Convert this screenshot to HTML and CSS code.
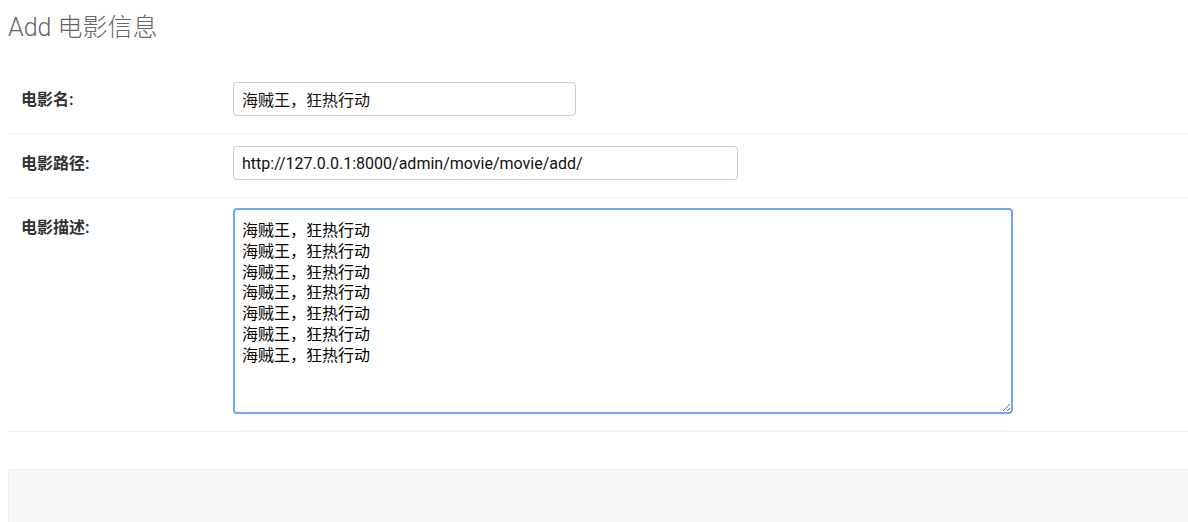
FILE: index.html
```html
<!DOCTYPE html>
<html lang="zh">
<head>
<meta charset="utf-8">
<title>Add 电影信息</title>
<link rel="stylesheet" href="styles.css">
</head>
<body>
<div class="content">
  <h1 class="title">Add 电影信息</h1>
  <form class="form">
    <div class="form-row">
      <label class="label" for="name">电影名:</label>
      <input class="field field-name" id="name" type="text" value="海贼王，狂热行动">
    </div>
    <div class="form-row">
      <label class="label" for="url">电影路径:</label>
      <input class="field field-url" id="url" type="text" value="http://127.0.0.1:8000/admin/movie/movie/add/">
    </div>
    <div class="form-row">
      <label class="label" for="desc">电影描述:</label>
      <textarea class="field field-desc" id="desc">海贼王，狂热行动
海贼王，狂热行动
海贼王，狂热行动
海贼王，狂热行动
海贼王，狂热行动
海贼王，狂热行动
海贼王，狂热行动</textarea>
    </div>
    <div class="submit-row"></div>
  </form>
</div>
</body>
</html>
```
FILE: styles.css
```css
* { box-sizing: border-box; }
html, body { margin: 0; padding: 0; background: #fff; overflow: hidden; }
body {
  font-family: Roboto, "Noto Sans CJK SC", sans-serif;
  font-size: 16px;
  color: #333;
  width: 1188px;
  height: 522px;
}
.content {
  padding-left: 8px;
}
.title {
  margin: 14px 0 28px;
  font-size: 25px;
  line-height: 28px;
  font-weight: 300;
  color: #666;
}
.form-row {
  display: flex;
  align-items: flex-start;
  padding: 12px 0 17px 13px;
  border-bottom: 1px solid #eee;
}
.label {
  width: 212px;
  flex: none;
  padding-top: 8px;
  font-weight: bold;
  font-size: 16px;
  line-height: 20px;
  color: #333;
}
.field {
  font-family: Roboto, "Noto Sans CJK SC", sans-serif;
  font-size: 16px;
  color: #111;
  border: 1px solid #ccc;
  border-radius: 4px;
  background: #fff;
  padding: 0 8px;
  height: 34px;
  outline: none;
}
.field-name { width: 343px; }
.field-url { width: 505px; }
.field-desc {
  width: 780px;
  height: 206px;
  margin-top: -2px;
  border: 2px solid #6ea7f6;
  padding: 9px 7px;
  line-height: 20.8px;
  resize: both;
  font-family: "Noto Sans CJK SC", sans-serif;
  color: #000;
}
.submit-row {
  margin-top: 37px;
  margin-right: -20px;
  height: 53px;
  background: #f8f8f8;
  border: 1px solid #eee;
  border-bottom: none;
  border-radius: 4px 4px 0 0;
}
```
